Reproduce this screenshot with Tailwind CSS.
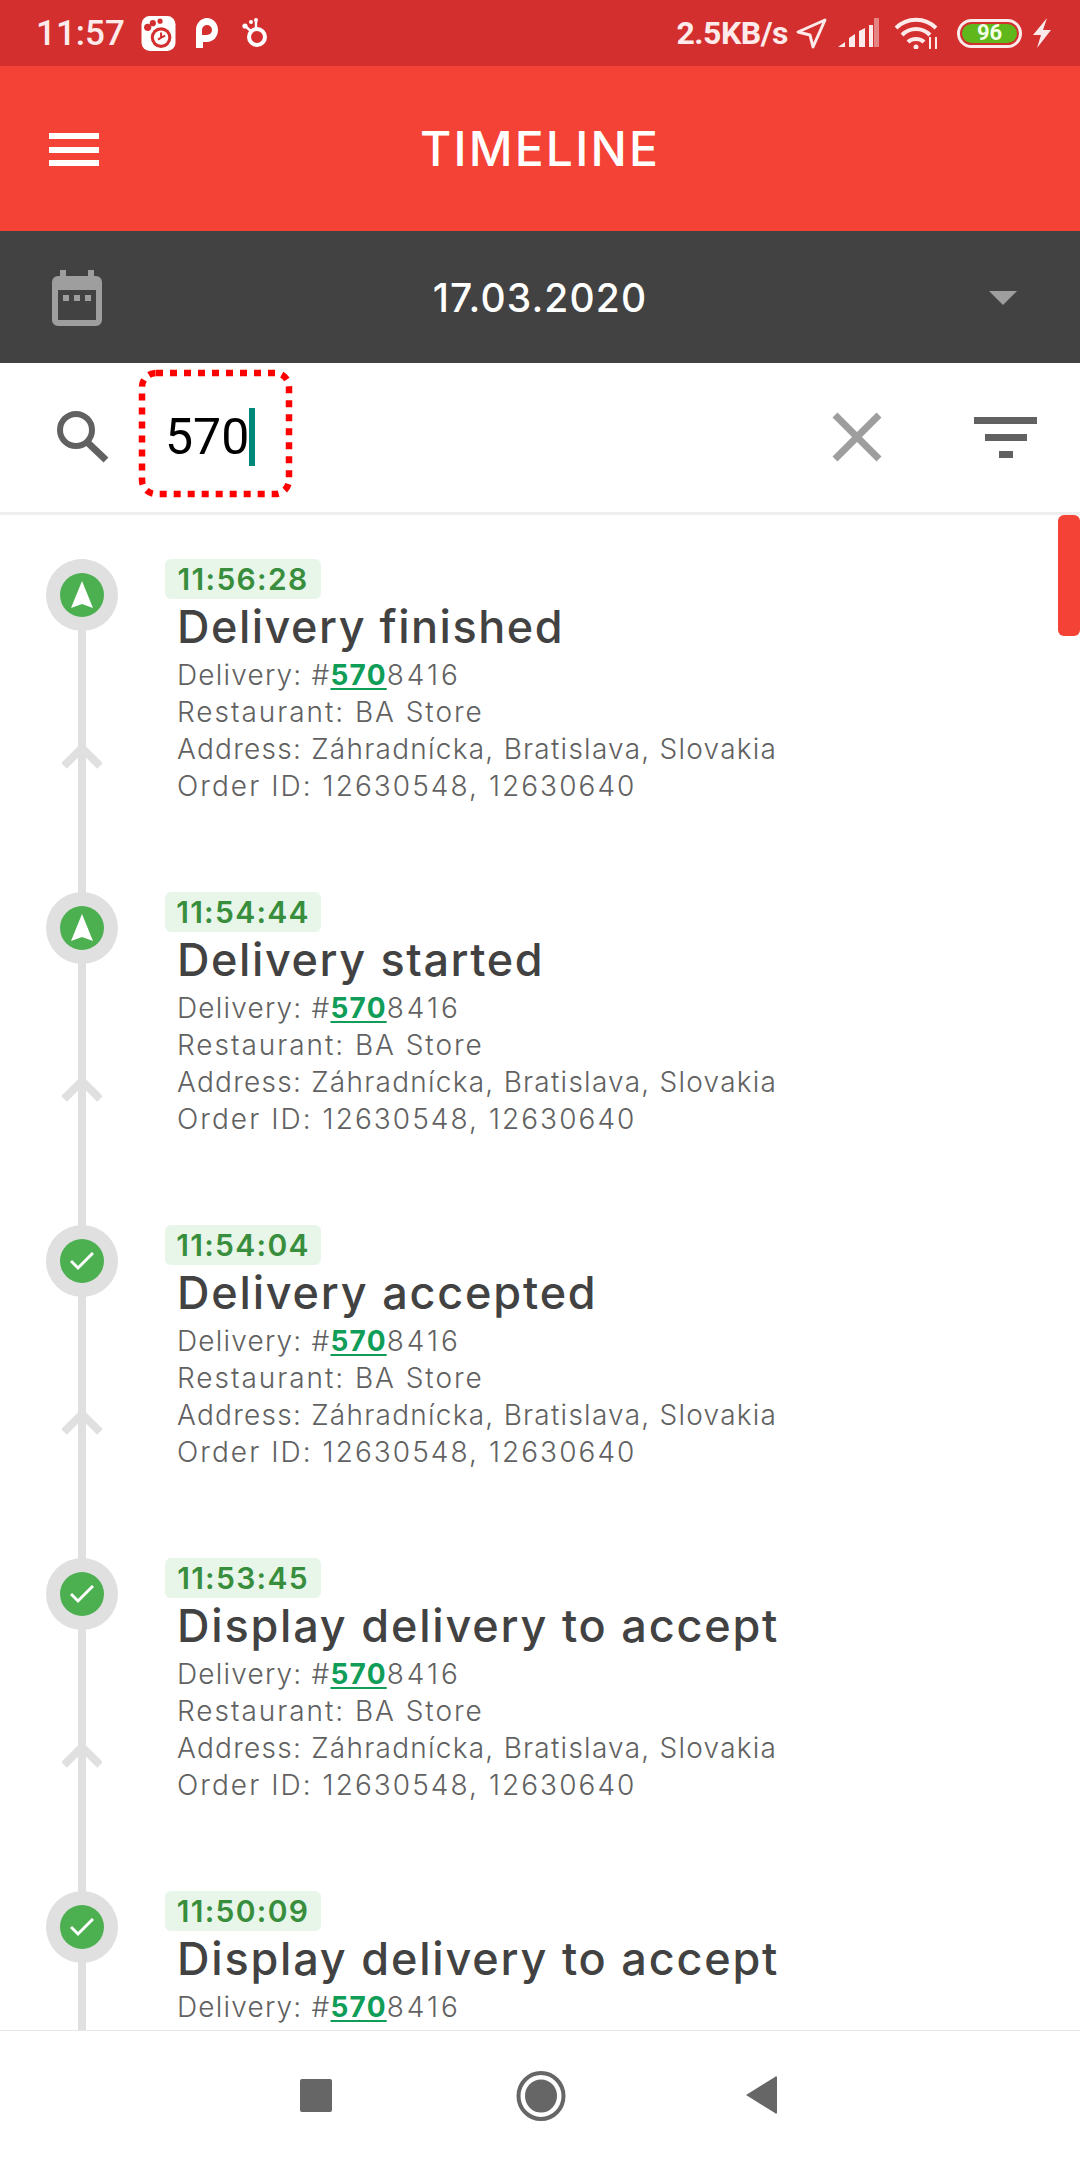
<!DOCTYPE html>
<html>
<head>
<meta charset="utf-8">
<script src="https://cdn.jsdelivr.net/npm/@tailwindcss/browser@4"></script>
</head>
<body class="m-0 bg-white">
<div class="w-[1080px] h-[2160px] flex flex-col overflow-hidden bg-white relative font-['Inter',sans-serif]">

  <!-- status bar -->
  <div class="h-[66px] bg-[#d32f2f] flex items-center justify-between pl-[36px] pr-[28px] shrink-0 text-[#fdeaea] font-['Roboto',sans-serif]">
    <div class="flex items-center">
      <span class="text-[35px] font-medium leading-none w-[105px]">11:57</span>
      <svg width="35" height="35" viewBox="0 0 33 34"><rect width="33" height="34" rx="8" fill="#fff"/><circle cx="19" cy="21" r="10" fill="#d32f2f"/><circle cx="19" cy="21" r="7" fill="#fff"/><path d="M19 16v5l-3 2M19 21l4-2" stroke="#d32f2f" stroke-width="2" fill="none"/><circle cx="6" cy="11" r="3.5" fill="#d32f2f"/><circle cx="11" cy="7" r="3" fill="#d32f2f"/><circle cx="18" cy="5" r="2.5" fill="#d32f2f"/></svg>
      <svg width="24" height="30" viewBox="0 0 24 30" class="ml-[19px]"><path fill-rule="evenodd" d="M1 30V12C1 5 6 0 12 0s11 5 11 12-5 12-11 12H8v6zM12 7a5 5 0 0 0-5 5v5h5a5 5 0 0 0 0-10z" fill="#fff"/></svg>
      <svg width="26" height="30" viewBox="0 0 26 30" class="ml-[23px]"><circle cx="15" cy="19" r="8" fill="none" stroke="#fff" stroke-width="4"/><circle cx="3" cy="8" r="2.6" fill="#fff"/><circle cx="9" cy="4" r="2" fill="#fff"/><circle cx="14" cy="2" r="2" fill="#fff"/><path d="M3 8l7 6M14 2v8" stroke="#fff" stroke-width="2.4"/></svg>
    </div>
    <div class="flex items-center">
      <span class="text-[32px] font-bold leading-none tracking-[-0.5px]">2.5KB/s</span>
      <svg width="31" height="31" viewBox="0 0 31 31" class="ml-[8px]"><path d="M29 2L2 14l12 3 3 12z" fill="none" stroke="#fdeaea" stroke-width="3" stroke-linejoin="round"/></svg>
      <svg width="42" height="30" viewBox="0 0 42 30" class="ml-[11px]"><path d="M0 29l7-5v5zM11 20l6-4v13h-6zM21 13l6-3v19h-6zM31 7h4v22h-4z" fill="#fdeaea"/><rect x="36" y="0" width="5" height="29" fill="#fdeaea" opacity=".45"/></svg>
      <svg width="44" height="32" viewBox="0 0 44 32" class="ml-[14px]"><path d="M2 11c11-11 29-11 40 0M8 18c8-8 20-8 28 0M14 25c4-4 12-4 16 0" fill="none" stroke="#fdeaea" stroke-width="4"/><circle cx="22" cy="30" r="2.5" fill="#fdeaea"/><path d="M36 20v12M42 20v12" stroke="#fdeaea" stroke-width="2"/></svg>
      <div class="ml-[19px] w-[65px] h-[29px] rounded-full border-[3px] border-[#fdeaea] flex items-center justify-center p-[2px]">
        <div class="w-full h-full rounded-full bg-[#5fb71b] text-[#f4ffe8] text-[22px] font-bold leading-none flex items-center justify-center">96</div>
      </div>
      <svg width="20" height="30" viewBox="0 0 20 30" class="ml-[10px]"><path d="M15 0L1 17h8L5 30l14-18h-8z" fill="#fdeaea"/></svg>
    </div>
  </div>

  <!-- header -->
  <div class="h-[165px] bg-[#f44336] flex items-center justify-center relative shrink-0">
    <div class="absolute left-[49px] top-[67px] w-[50px] h-[33px] flex flex-col justify-between">
      <div class="h-[6px] bg-white"></div><div class="h-[6px] bg-white"></div><div class="h-[6px] bg-white"></div>
    </div>
    <span class="text-white text-[48px] font-medium leading-none tracking-[2.2px]">TIMELINE</span>
  </div>

  <!-- date -->
  <div class="h-[132px] bg-[#424242] flex items-center justify-center relative shrink-0">
    <svg class="absolute left-[52px] top-[39px]" width="50" height="56" viewBox="0 0 50 56"><path fill-rule="evenodd" fill="#9e9e9e" d="M8 0h6v6h22V0h6v6h2a6 6 0 0 1 6 6v38a6 6 0 0 1-6 6H6a6 6 0 0 1-6-6V12a6 6 0 0 1 6-6h2zM6 20v30h38V20z"/><rect x="11" y="25" width="6" height="6" fill="#9e9e9e"/><rect x="22" y="25" width="6" height="6" fill="#9e9e9e"/><rect x="33" y="25" width="6" height="6" fill="#9e9e9e"/></svg>
    <span class="text-white text-[39px] font-medium leading-none tracking-[1.1px]">17.03.2020</span>
    <svg class="absolute left-[989px] top-[60px]" width="28" height="14" viewBox="0 0 28 14"><path d="M0 0h28L14 14z" fill="#9e9e9e"/></svg>
  </div>

  <!-- search -->
  <div class="h-[152px] border-b-[3px] border-[#eeeeee] relative shrink-0 flex items-center pl-[165px]">
    <svg class="absolute left-[55px] top-[46px]" width="56" height="56" viewBox="0 0 56 56"><circle cx="21" cy="21" r="16" fill="none" stroke="#616161" stroke-width="6"/><path d="M32 33l19 18" stroke="#616161" stroke-width="7"/></svg>
    <span class="text-black text-[50px] leading-none font-['Roboto',sans-serif] font-normal relative -top-[1px]">570</span>
    <div class="w-[6px] h-[58px] bg-[#00897b] ml-[0px] -mt-[2px]"></div>
    <svg class="absolute left-[136px] top-[4px]" width="160" height="134" viewBox="0 0 160 134"><rect x="6" y="6" width="147" height="121" rx="14" fill="none" stroke="#ff0000" stroke-width="6.5" stroke-dasharray="7 7"/></svg>
    <svg class="absolute left-[830px] top-[47px]" width="54" height="54" viewBox="0 0 54 54"><path d="M5 5l44 44M49 5L5 49" stroke="#9e9e9e" stroke-width="7"/></svg>
    <div class="absolute left-[974px] top-[54px] w-[63px] flex flex-col items-center gap-[10px]">
      <div class="w-[63px] h-[7px] bg-[#616161]"></div><div class="w-[42px] h-[7px] bg-[#616161]"></div><div class="w-[14px] h-[7px] bg-[#616161]"></div>
    </div>
  </div>

  <!-- list -->
  <div class="flex-1 min-h-0 overflow-hidden relative pt-[44px]">
    <div class="absolute right-0 top-0 w-[22px] h-[121px] bg-[#f44336] rounded-[6px]"></div>

    <div class="h-[333px] flex relative">
      <div class="w-[165px] shrink-0 relative">
        <div class="absolute left-[78px] top-[0px] h-[333px] w-[8px] bg-[#e0e0e0]"></div>
        <svg class="absolute left-[62px] top-[184px]" width="40" height="26" viewBox="0 0 40 26"><path d="M2 23L20 5l18 18" fill="none" stroke="#e0e0e0" stroke-width="8"/></svg>
        <div class="absolute left-[46px] top-0 w-[72px] h-[72px] rounded-full bg-[#e0e0e0] flex items-center justify-center">
          <div class="w-[44px] h-[44px] rounded-full bg-[#4caf50] flex items-center justify-center">
            <svg width="22" height="28" viewBox="0 0 22 28"><path d="M11 0l11 27-11-4-11 4z" fill="#fff"/></svg>
          </div>
        </div>
      </div>
      <div class="flex flex-col items-start">
        <div class="h-[40px] w-[156px] rounded-[6px] bg-[#e8f5e9] text-[#388e3c] text-[30px] font-semibold leading-[40px] text-center tracking-[1.3px]">11:56:28</div>
        <div class="pl-[12px] mt-[4px] text-[#424242] text-[45px] font-medium leading-[48px] tracking-[1.5px] whitespace-nowrap">Delivery finished</div>
        <div class="pl-[12px] text-[#616161] text-[28px] font-[350] leading-[37px] whitespace-nowrap mt-[6px]">
          <div class="tracking-[1.2px]">Delivery: #<span class="font-bold text-[#0f9d58] underline underline-offset-[3px] decoration-[2px]">570</span><span class="tracking-[3px]">8416</span></div>
          <div class="tracking-[1.95px]">Restaurant: BA Store</div>
          <div class="tracking-[1.25px]">Address: Záhradnícka, Bratislava, Slovakia</div>
          <div class="tracking-[2.05px]">Order ID: 12630548, 12630640</div>
        </div>
      </div>
    </div>

    <div class="h-[333px] flex relative">
      <div class="w-[165px] shrink-0 relative">
        <div class="absolute left-[78px] top-[0px] h-[333px] w-[8px] bg-[#e0e0e0]"></div>
        <svg class="absolute left-[62px] top-[184px]" width="40" height="26" viewBox="0 0 40 26"><path d="M2 23L20 5l18 18" fill="none" stroke="#e0e0e0" stroke-width="8"/></svg>
        <div class="absolute left-[46px] top-0 w-[72px] h-[72px] rounded-full bg-[#e0e0e0] flex items-center justify-center">
          <div class="w-[44px] h-[44px] rounded-full bg-[#4caf50] flex items-center justify-center">
            <svg width="22" height="28" viewBox="0 0 22 28"><path d="M11 0l11 27-11-4-11 4z" fill="#fff"/></svg>
          </div>
        </div>
      </div>
      <div class="flex flex-col items-start">
        <div class="h-[40px] w-[156px] rounded-[6px] bg-[#e8f5e9] text-[#388e3c] text-[30px] font-semibold leading-[40px] text-center tracking-[1.3px]">11:54:44</div>
        <div class="pl-[12px] mt-[4px] text-[#424242] text-[45px] font-medium leading-[48px] tracking-[1.6px] whitespace-nowrap">Delivery started</div>
        <div class="pl-[12px] text-[#616161] text-[28px] font-[350] leading-[37px] whitespace-nowrap mt-[6px]">
          <div class="tracking-[1.2px]">Delivery: #<span class="font-bold text-[#0f9d58] underline underline-offset-[3px] decoration-[2px]">570</span><span class="tracking-[3px]">8416</span></div>
          <div class="tracking-[1.95px]">Restaurant: BA Store</div>
          <div class="tracking-[1.25px]">Address: Záhradnícka, Bratislava, Slovakia</div>
          <div class="tracking-[2.05px]">Order ID: 12630548, 12630640</div>
        </div>
      </div>
    </div>

    <div class="h-[333px] flex relative">
      <div class="w-[165px] shrink-0 relative">
        <div class="absolute left-[78px] top-[0px] h-[333px] w-[8px] bg-[#e0e0e0]"></div>
        <svg class="absolute left-[62px] top-[184px]" width="40" height="26" viewBox="0 0 40 26"><path d="M2 23L20 5l18 18" fill="none" stroke="#e0e0e0" stroke-width="8"/></svg>
        <div class="absolute left-[46px] top-0 w-[72px] h-[72px] rounded-full bg-[#e0e0e0] flex items-center justify-center">
          <div class="w-[44px] h-[44px] rounded-full bg-[#4caf50] flex items-center justify-center">
            <svg width="24" height="19" viewBox="0 0 24 19"><path d="M1 9l7 7L23 1" fill="none" stroke="#fff" stroke-width="3"/></svg>
          </div>
        </div>
      </div>
      <div class="flex flex-col items-start">
        <div class="h-[40px] w-[156px] rounded-[6px] bg-[#e8f5e9] text-[#388e3c] text-[30px] font-semibold leading-[40px] text-center tracking-[1.3px]">11:54:04</div>
        <div class="pl-[12px] mt-[4px] text-[#424242] text-[45px] font-medium leading-[48px] tracking-[1.8px] whitespace-nowrap">Delivery accepted</div>
        <div class="pl-[12px] text-[#616161] text-[28px] font-[350] leading-[37px] whitespace-nowrap mt-[6px]">
          <div class="tracking-[1.2px]">Delivery: #<span class="font-bold text-[#0f9d58] underline underline-offset-[3px] decoration-[2px]">570</span><span class="tracking-[3px]">8416</span></div>
          <div class="tracking-[1.95px]">Restaurant: BA Store</div>
          <div class="tracking-[1.25px]">Address: Záhradnícka, Bratislava, Slovakia</div>
          <div class="tracking-[2.05px]">Order ID: 12630548, 12630640</div>
        </div>
      </div>
    </div>

    <div class="h-[333px] flex relative">
      <div class="w-[165px] shrink-0 relative">
        <div class="absolute left-[78px] top-[0px] h-[333px] w-[8px] bg-[#e0e0e0]"></div>
        <svg class="absolute left-[62px] top-[184px]" width="40" height="26" viewBox="0 0 40 26"><path d="M2 23L20 5l18 18" fill="none" stroke="#e0e0e0" stroke-width="8"/></svg>
        <div class="absolute left-[46px] top-0 w-[72px] h-[72px] rounded-full bg-[#e0e0e0] flex items-center justify-center">
          <div class="w-[44px] h-[44px] rounded-full bg-[#4caf50] flex items-center justify-center">
            <svg width="24" height="19" viewBox="0 0 24 19"><path d="M1 9l7 7L23 1" fill="none" stroke="#fff" stroke-width="3"/></svg>
          </div>
        </div>
      </div>
      <div class="flex flex-col items-start">
        <div class="h-[40px] w-[156px] rounded-[6px] bg-[#e8f5e9] text-[#388e3c] text-[30px] font-semibold leading-[40px] text-center tracking-[1.3px]">11:53:45</div>
        <div class="pl-[12px] mt-[4px] text-[#424242] text-[45px] font-medium leading-[48px] tracking-[1.8px] whitespace-nowrap">Display delivery to accept</div>
        <div class="pl-[12px] text-[#616161] text-[28px] font-[350] leading-[37px] whitespace-nowrap mt-[6px]">
          <div class="tracking-[1.2px]">Delivery: #<span class="font-bold text-[#0f9d58] underline underline-offset-[3px] decoration-[2px]">570</span><span class="tracking-[3px]">8416</span></div>
          <div class="tracking-[1.95px]">Restaurant: BA Store</div>
          <div class="tracking-[1.25px]">Address: Záhradnícka, Bratislava, Slovakia</div>
          <div class="tracking-[2.05px]">Order ID: 12630548, 12630640</div>
        </div>
      </div>
    </div>

    <div class="h-[333px] flex relative">
      <div class="w-[165px] shrink-0 relative">
        <div class="absolute left-[78px] top-[0px] h-[333px] w-[8px] bg-[#e0e0e0]"></div>
        <div class="absolute left-[46px] top-0 w-[72px] h-[72px] rounded-full bg-[#e0e0e0] flex items-center justify-center">
          <div class="w-[44px] h-[44px] rounded-full bg-[#4caf50] flex items-center justify-center">
            <svg width="24" height="19" viewBox="0 0 24 19"><path d="M1 9l7 7L23 1" fill="none" stroke="#fff" stroke-width="3"/></svg>
          </div>
        </div>
      </div>
      <div class="flex flex-col items-start">
        <div class="h-[40px] w-[156px] rounded-[6px] bg-[#e8f5e9] text-[#388e3c] text-[30px] font-semibold leading-[40px] text-center tracking-[1.3px]">11:50:09</div>
        <div class="pl-[12px] mt-[4px] text-[#424242] text-[45px] font-medium leading-[48px] tracking-[1.8px] whitespace-nowrap">Display delivery to accept</div>
        <div class="pl-[12px] text-[#616161] text-[28px] font-[350] leading-[37px] whitespace-nowrap mt-[6px]">
          <div class="tracking-[1.2px]">Delivery: #<span class="font-bold text-[#0f9d58] underline underline-offset-[3px] decoration-[2px]">570</span><span class="tracking-[3px]">8416</span></div>
        </div>
      </div>
    </div>
  </div>

  <!-- nav -->
  <div class="h-[130px] border-t-[1px] border-[#e8e8e8] bg-white shrink-0 relative">
    <div class="absolute left-[300px] top-[48px] w-[32px] h-[33px] rounded-[2px] bg-[#666666]"></div>
    <svg class="absolute left-[516px] top-[39px]" width="50" height="52" viewBox="0 0 50 52"><ellipse cx="25" cy="26" rx="22.500" ry="23" fill="none" stroke="#666" stroke-width="4"/><ellipse cx="25" cy="26" rx="16" ry="16.500" fill="#666"/></svg>
    <svg class="absolute left-[745px] top-[45px]" width="32" height="38" viewBox="0 0 32 38"><path d="M1 19L30 1a1 1 0 0 1 2 1v34a1 1 0 0 1-2 1z" fill="#666"/></svg>
  </div>
</div>
</body>
</html>
